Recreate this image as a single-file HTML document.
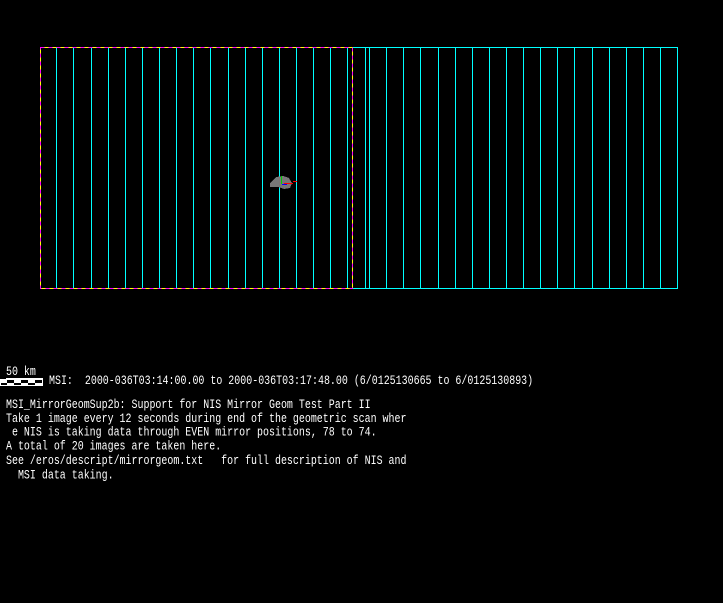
<html><head><style>
body{margin:0;background:#000;width:723px;height:603px;overflow:hidden;position:relative}
.t{position:absolute;left:6px;color:#fff;font-family:"Liberation Mono",monospace;font-size:12px;white-space:pre;transform-origin:0 0;transform:scale(0.83,1.1);line-height:12.7px}
</style></head><body>
<svg width="723" height="603" style="position:absolute;left:0;top:0" shape-rendering="crispEdges">
<g fill="#0ff">
<rect x="352" y="47" width="326" height="1"/><rect x="352" y="288" width="326" height="1"/><rect x="677" y="47" width="1" height="242"/>
<rect x="56" y="47" width="1" height="241"/><rect x="73" y="47" width="1" height="241"/><rect x="91" y="47" width="1" height="241"/><rect x="108" y="47" width="1" height="241"/><rect x="125" y="47" width="1" height="241"/><rect x="142" y="47" width="1" height="241"/><rect x="159" y="47" width="1" height="241"/><rect x="176" y="47" width="1" height="241"/><rect x="193" y="47" width="1" height="241"/><rect x="210" y="47" width="1" height="241"/><rect x="228" y="47" width="1" height="241"/><rect x="245" y="47" width="1" height="241"/><rect x="262" y="47" width="1" height="241"/><rect x="279" y="47" width="1" height="241"/><rect x="296" y="47" width="1" height="241"/><rect x="313" y="47" width="1" height="241"/><rect x="330" y="47" width="1" height="241"/><rect x="347" y="47" width="1" height="241"/>
<rect x="365" y="47" width="1" height="241"/><rect x="369" y="47" width="1" height="241"/><rect x="386" y="47" width="1" height="241"/><rect x="403" y="47" width="1" height="241"/><rect x="420" y="47" width="1" height="241"/><rect x="438" y="47" width="1" height="241"/><rect x="455" y="47" width="1" height="241"/><rect x="472" y="47" width="1" height="241"/><rect x="489" y="47" width="1" height="241"/><rect x="506" y="47" width="1" height="241"/><rect x="523" y="47" width="1" height="241"/><rect x="540" y="47" width="1" height="241"/><rect x="557" y="47" width="1" height="241"/><rect x="574" y="47" width="1" height="241"/><rect x="592" y="47" width="1" height="241"/><rect x="609" y="47" width="1" height="241"/><rect x="626" y="47" width="1" height="241"/><rect x="643" y="47" width="1" height="241"/><rect x="660" y="47" width="1" height="241"/>
</g>
<g fill="none" stroke-width="1">
<path d="M40.5 47.5H352.5V288.5H40.5Z" stroke="#ff0"/>
<path d="M40.5 47.5H352.5V288.5H40.5Z" stroke="#f0f" stroke-dasharray="4 4"/>
</g>
<path d="M270 183L276 177L283 176L289 178L292 183L290 188L284 189L278 187L270 187Z" fill="#777"/>
<rect x="281" y="176" width="1" height="8" fill="#0c0"/>
<rect x="284" y="183" width="9" height="1" fill="#f00"/><rect x="293" y="181" width="4" height="1" fill="#f00"/>
<rect x="282" y="184" width="5" height="1" fill="#00f"/>
<rect x="6" y="378" width="37" height="1" fill="#fff"/>
<rect x="0.5" y="379.5" width="42" height="6" fill="none" stroke="#fff"/>
<g fill="#fff"><rect x="0" y="380" width="7" height="3"/><rect x="14" y="380" width="7" height="3"/><rect x="28" y="380" width="7" height="3"/><rect x="7" y="383" width="7" height="3"/><rect x="21" y="383" width="7" height="3"/><rect x="35" y="383" width="8" height="3"/></g>
</svg>
<div class="t" style="top:365px">50 km</div>
<div class="t" style="top:374px;left:49px">MSI:  2000-036T03:14:00.00 to 2000-036T03:17:48.00 (6/0125130665 to 6/0125130893)</div>
<div class="t" style="top:398px">MSI_MirrorGeomSup2b: Support for NIS Mirror Geom Test Part II
Take 1 image every 12 seconds during end of the geometric scan wher
 e NIS is taking data through EVEN mirror positions, 78 to 74.
A total of 20 images are taken here.
See /eros/descript/mirrorgeom.txt   for full description of NIS and
  MSI data taking.</div>
</body></html>
